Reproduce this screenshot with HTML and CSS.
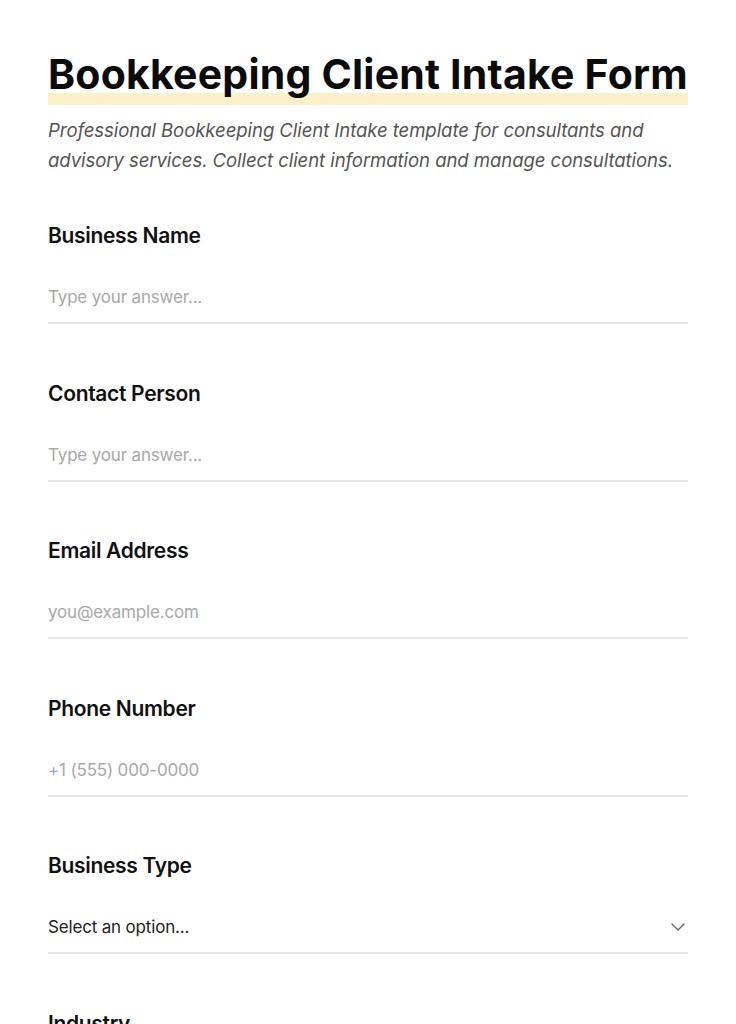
FILE: index.html
```html
<!DOCTYPE html>
<html lang="en">
<head>
<meta charset="utf-8">
<title>Bookkeeping Client Intake Form</title>
<link rel="stylesheet" href="styles.css">
</head>
<body>
<main class="page">
  <header class="intro">
    <h1 class="title">Bookkeeping Client Intake Form</h1>
    <p class="subtitle">Professional Bookkeeping Client Intake template for consultants and advisory services. Collect client information and manage consultations.</p>
  </header>
  <form class="form">
    <div class="field">
      <label class="label">Business Name</label>
      <div class="input placeholder">Type your answer...</div>
    </div>
    <div class="field">
      <label class="label">Contact Person</label>
      <div class="input placeholder">Type your answer...</div>
    </div>
    <div class="field">
      <label class="label">Email Address</label>
      <div class="input placeholder">you@example.com</div>
    </div>
    <div class="field">
      <label class="label">Phone Number</label>
      <div class="input placeholder">+1 (555) 000-0000</div>
    </div>
    <div class="field">
      <label class="label">Business Type</label>
      <div class="input select">
        <span>Select an option...</span>
        <svg class="chevron" width="14" height="8" viewBox="0 0 14 8" aria-hidden="true"><path d="M1 1l6 6 6-6" fill="none" stroke="#666" stroke-width="1.4" stroke-linecap="round" stroke-linejoin="round"/></svg>
      </div>
    </div>
    <div class="field">
      <label class="label">Industry</label>
      <div class="input select">
        <span>Select an option...</span>
        <svg class="chevron" width="14" height="8" viewBox="0 0 14 8" aria-hidden="true"><path d="M1 1l6 6 6-6" fill="none" stroke="#666" stroke-width="1.4" stroke-linecap="round" stroke-linejoin="round"/></svg>
      </div>
    </div>
  </form>
</main>
</body>
</html>
```
FILE: styles.css
```css
html, body {
  margin: 0;
  padding: 0;
  background: #ffffff;
}
body {
  font-family: Inter, "Noto Sans", sans-serif;
  color: #111111;
}
.page {
  width: 640px;
  padding: 50px 48px 0;
}
.intro {
  margin-bottom: 47px;
}
.title {
  width: fit-content;
  margin: 0;
  padding-bottom: 7px;
  font-size: 41px;
  font-weight: 700;
  line-height: 48px;
  letter-spacing: 0.005em;
  color: #0b0b0b;
  background: linear-gradient(to bottom, transparent calc(100% - 12px), #fdf0c8 calc(100% - 12px));
}
.subtitle {
  margin: 10px 0 0;
  font-size: 18.6px;
  line-height: 30px;
  font-style: italic;
  font-weight: 400;
  color: #555555;
  letter-spacing: -0.005em;
}
.form {
  display: flex;
  flex-direction: column;
  gap: 55.5px;
}
.field {
  display: flex;
  flex-direction: column;
  gap: 22px;
}
.label {
  font-size: 21px;
  font-weight: 600;
  line-height: 28px;
  letter-spacing: -0.015em;
  color: #111111;
}
.input {
  padding: 12px 0;
  font-size: 17px;
  line-height: 26px;
  letter-spacing: -0.01em;
  border-bottom: 2px solid #e6e6e6;
}
.placeholder {
  color: #a8a8a8;
}
.select {
  display: flex;
  align-items: center;
  justify-content: space-between;
  color: #222222;
}
.chevron {
  margin-right: 3px;
}
```
